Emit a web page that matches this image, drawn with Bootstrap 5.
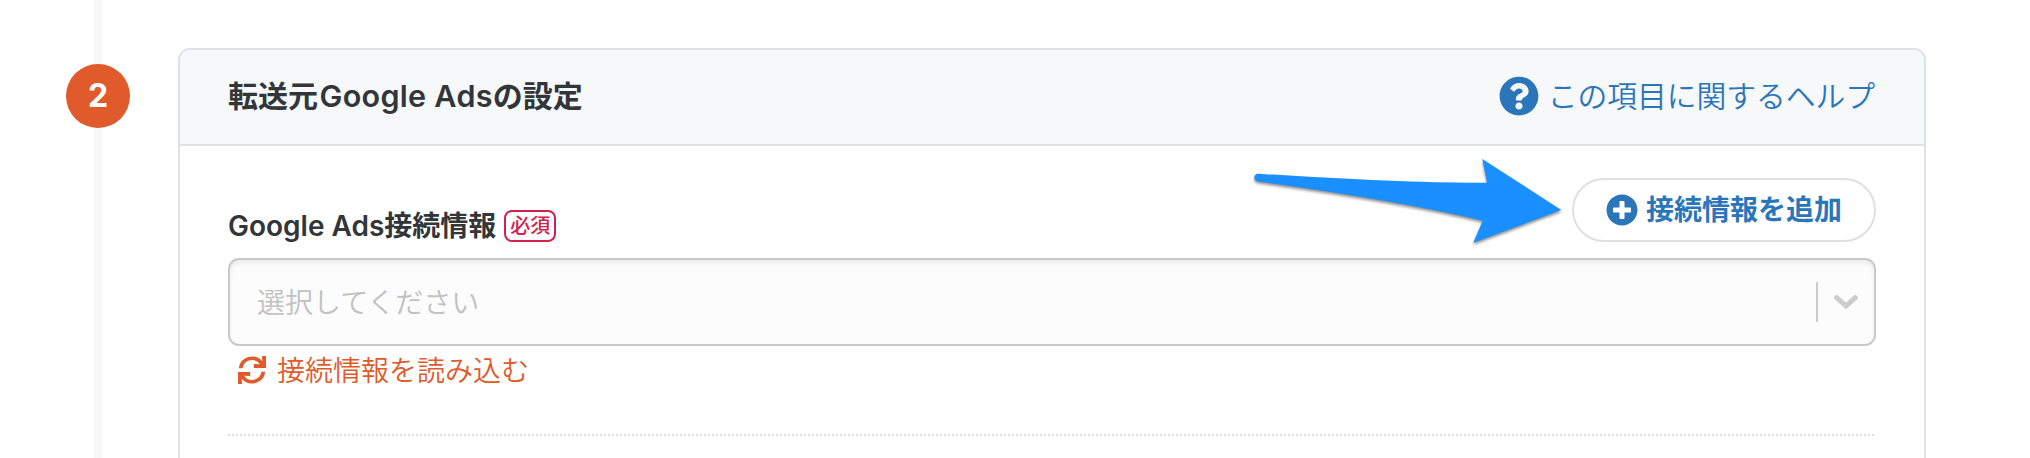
<!DOCTYPE html>
<html lang="ja">
<head>
<meta charset="utf-8">
<title>転送元Google Adsの設定</title>
<link href="https://cdn.jsdelivr.net/npm/bootstrap@5.3.0/dist/css/bootstrap.min.css" rel="stylesheet">
<style>
body{font-family:Inter,"Noto Sans CJK JP",sans-serif;font-size:28px;line-height:1.5;color:#333639;background:#fff}
.step-col{width:178px;padding-left:66px;height:458px}
.step-rail{width:64px;height:100%;padding-top:64px;background:linear-gradient(#f7f7f7,#f7f7f7) 28px 0/8px 100% no-repeat}
.step-num{width:64px;height:64px;background:#e05a2b;color:#fff;font-weight:700;font-size:32px}
.panel{width:1748px;height:410px;margin-top:48px;border:2px solid #dfe1e3;border-bottom:0;border-radius:12px 12px 0 0}
.panel>.card-header{height:96px;padding:0 48px 2px;background:#f6f8fa;border-bottom:2px solid #dfe1e3;border-radius:10px 10px 0 0}
.panel>.card-body{padding:32px 48px 0}
.ttl{font-size:30px;font-weight:600}
.ttl span{font-size:30.500px;letter-spacing:.3px;margin-left:1.5px}
.help,.add-btn{color:#2b76bb;text-decoration:none}
.help{font-size:29.800px;gap:9px;letter-spacing:-.05px;margin-right:1px}
.help-text,.pick-text{font-family:"Noto Sans CJK JP DemiLight","Noto Sans CJK JP",sans-serif;font-weight:350;padding-bottom:3px}
.req{border:2px solid #d1214e;color:#d1214e;border-radius:8px;width:52px;height:32px;font-size:20px;font-weight:500}
.lbl{font-weight:600;height:32px;gap:8px}
.add-btn{width:304px;height:64px;border:2px solid #dfe0e1;border-radius:32px;font-weight:600;gap:8px;background:#fff}
.picker{margin-top:16px;height:88px;border:2px solid #c8c9ca;border-radius:11px;background:#fcfcfc;box-shadow:inset 0 3px 5px rgba(0,0,0,.07);color:#c0c1c2;padding:0 16px 0 27px}
.bar{width:2px;height:40px;background:#ccc;margin-right:16px}
.reload{color:#e05a2b;text-decoration:none;height:48px;padding-left:10px;gap:11px}
.dots{margin-top:40px;height:2px;background:repeating-linear-gradient(90deg,#dedede 0 2px,transparent 2px 4px)}
.pointer{left:1240px;top:140px;pointer-events:none;filter:drop-shadow(0 2px 1.5px rgba(0,0,0,.45))}
</style>
</head>
<body>
<main class="d-flex position-relative">
  <div class="step-col flex-shrink-0"><div class="step-rail"><div class="step-num rounded-circle d-flex align-items-center justify-content-center">2</div></div></div>
  <section class="card panel flex-shrink-0">
    <div class="card-header d-flex align-items-center justify-content-between">
      <div class="ttl">転送元<span>Google Ads</span>の設定</div>
      <a href="#" class="help d-flex align-items-center">
        <svg width="40" height="40" viewBox="0 0 512 512" fill="currentColor"><path d="M504 256c0 137-111 248-248 248S8 393 8 256 119 8 256 8s248 111 248 248zM262.700 90c-54.500 0-89.300 23-116.500 63.800-3.500 5.300-2.400 12.400 2.700 16.300l34.700 26.300c5.200 3.900 12.600 3 16.700-2.100 17.900-22.700 30.100-35.800 57.300-35.800 20.400 0 45.700 13.100 45.700 33 0 15-12.400 22.700-32.500 34C247.100 238.500 216 254.900 216 296v4c0 6.600 5.400 12 12 12h56c6.600 0 12-5.400 12-12v-1.300c0-28.500 83.200-29.600 83.200-106.700 0-58-60.200-102-116.500-102zM256 338c-25.400 0-46 20.600-46 46s20.600 46 46 46 46-20.600 46-46-20.600-46-46-46z"/></svg>
        <span class="help-text">この項目に関するヘルプ</span>
      </a>
    </div>
    <div class="card-body">
      <div class="d-flex justify-content-between align-items-end">
        <div class="lbl d-flex align-items-center"><span>Google Ads接続情報</span><span class="req d-flex align-items-center justify-content-center">必須</span></div>
        <a href="#" class="add-btn d-flex align-items-center justify-content-center">
          <svg width="32" height="32" viewBox="0 0 512 512" fill="currentColor"><path d="M256 8C119 8 8 119 8 256s111 248 248 248 248-111 248-248S393 8 256 8zm144 276c0 6.600-5.400 12-12 12h-92v92c0 6.600-5.400 12-12 12h-56c-6.600 0-12-5.400-12-12v-92h-92c-6.600 0-12-5.400-12-12v-56c0-6.600 5.400-12 12-12h92v-92c0-6.600 5.400-12 12-12h56c6.600 0 12 5.400 12 12v92h92c6.600 0 12 5.400 12 12v56z"/></svg>
          <span>接続情報を追加</span>
        </a>
      </div>
      <div class="picker d-flex align-items-center">
        <span class="pick-text me-auto">選択してください</span>
        <span class="bar"></span>
        <svg width="24" height="14" viewBox="0 0 24 14" fill="none" stroke="#ccc" stroke-width="5" stroke-linecap="round"><path d="M2.700 2.700 12 11l9.300-8.300"/></svg>
      </div>
      <a href="#" class="reload d-flex align-items-center">
        <svg width="28" height="28" viewBox="0 0 28 28" fill="currentColor"><path id="half" d="M.7 12.200A13.500 13.500 0 0 1 24.300 5.200L24 0H28V12.100H15.800V8L22 8.300A9.600 9.600 0 0 0 4.600 12.200Z"/><use href="#half" transform="rotate(180 14 14)"/></svg>
        <span class="pick-text">接続情報を読み込む</span>
      </a>
      <div class="dots"></div>
    </div>
  </section>
  <svg class="pointer position-absolute" width="340" height="120" viewBox="0 0 340 120"><path fill="#1a8fff" d="M18 33.700Q170 43.500 247 42.700L242.300 19 321.300 70 233.300 102.700 242.700 80.700Q160 61 17 41.300A3.900 3.900 0 0 1 18 33.700Z"/></svg>
</main>
<script src="https://cdn.jsdelivr.net/npm/bootstrap@5.3.0/dist/js/bootstrap.bundle.min.js"></script>
</body>
</html>
